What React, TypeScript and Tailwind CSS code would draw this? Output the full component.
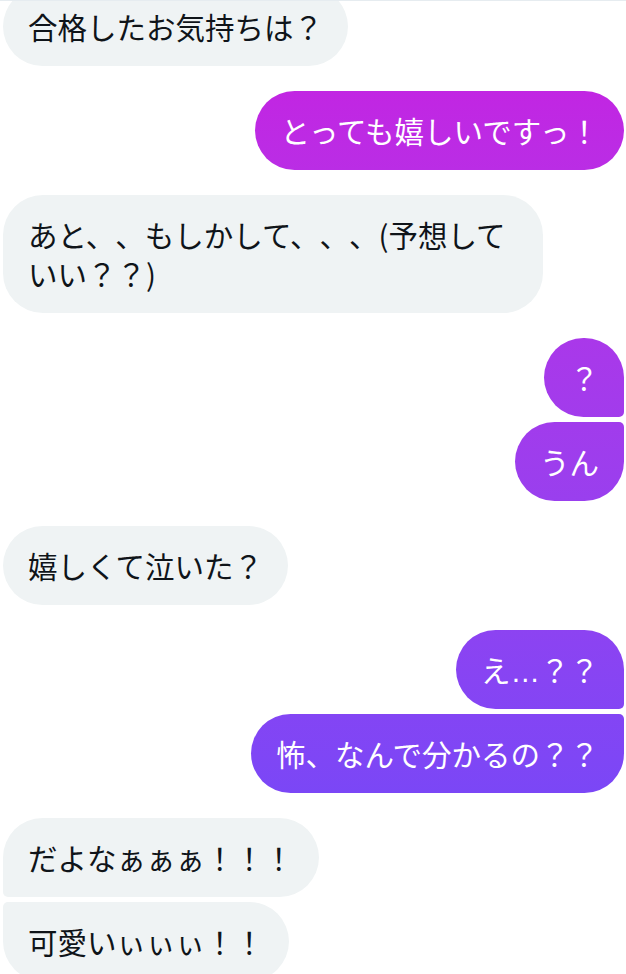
import React from "react";

type Msg = {
  text: React.ReactNode;
  me: boolean;
  // small corner on the sender side where bubbles of one group touch
  joinTop?: boolean;
  joinBottom?: boolean;
};

const groups: Msg[][] = [
  [{ text: "合格したお気持ちは？", me: false }],
  [{ text: "とっても嬉しいですっ！", me: true }],
  [{ text: "あと、、もしかして、、、(予想していい？？)", me: false }],
  [
    { text: "？", me: true, joinBottom: true },
    { text: "うん", me: true, joinTop: true },
  ],
  [{ text: "嬉しくて泣いた？", me: false }],
  [
    {
      text: (
        <>
          え<span className="font-['Liberation_Sans'] leading-none">…</span>？？
        </>
      ),
      me: true,
      joinBottom: true,
    },
    { text: "怖、なんで分かるの？？", me: true, joinTop: true },
  ],
  [
    { text: "だよなぁぁぁ！！！", me: false, joinBottom: true },
    { text: "可愛いぃぃぃ！！", me: false, joinTop: true },
  ],
];

function Bubble({ msg, first }: { msg: Msg; first?: boolean }) {
  const radius = msg.me
    ? `rounded-l-[40px] ${msg.joinTop ? "rounded-tr-[5px]" : "rounded-tr-[40px]"} ${
        msg.joinBottom ? "rounded-br-[5px]" : "rounded-br-[40px]"
      }`
    : `rounded-r-[40px] ${msg.joinTop ? "rounded-tl-[5px]" : "rounded-tl-[40px]"} ${
        msg.joinBottom ? "rounded-bl-[5px]" : "rounded-bl-[40px]"
      }`;

  return (
    <div className={`flex ${msg.me ? "justify-end" : "justify-start"} ${first ? "-mt-[14px]" : ""}`}>
      <div
        className={`max-w-[540px] px-[25px] py-[20px] text-[29.5px] leading-[39px] [text-spacing-trim:space-all] ${radius} ${
          msg.me
            ? "bg-linear-to-b from-[#ca1ae0] to-[#6649fb] bg-fixed text-white"
            : "bg-[#eff3f4] text-[#0f1419]"
        }`}
      >
        {msg.text}
      </div>
    </div>
  );
}

export default function App() {
  return (
    <div
      className="h-[974px] overflow-hidden border-t border-[#e6ecf0] bg-white pl-[3px] pr-[2px]"
      style={{ fontFamily: '"Noto Sans CJK JP", "Noto Sans", sans-serif' }}
    >
      <div className="flex flex-col gap-[25px]">
        {groups.map((group, gi) => (
          <div key={gi} className="flex flex-col gap-[5px]">
            {group.map((msg, mi) => (
              <Bubble key={mi} msg={msg} first={gi === 0 && mi === 0} />
            ))}
          </div>
        ))}
      </div>
    </div>
  );
}
